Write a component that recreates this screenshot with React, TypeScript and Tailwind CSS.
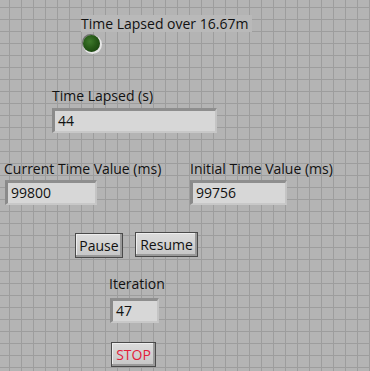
import React from 'react';

const font = { fontFamily: '"Open Sans", "Noto Sans", sans-serif' };

function Indicator({ value, width }: { value: string; width: string }) {
  return (
    <div
      className={`${width} h-[25px] flex items-center bg-[#d7d7d7] border-t-[3px] border-l-[3px] border-r-2 border-b-2 border-t-[#8e8e8e] border-l-[#8a8a8a] border-r-[#c4c4c4] border-b-[#c8c8c8] pl-[3px] text-[14px] text-[#111] leading-none`}
    >
      {value}
    </div>
  );
}

function Button({ label, width, red }: { label: string; width: string; red?: boolean }) {
  return (
    <button
      className={`${width} h-[25px] flex items-center justify-center bg-gradient-to-b from-[#dcdcdc] to-[#c6c6c6] border border-[#4a4a4a] shadow-[inset_-2px_-2px_0_#9a9a9a,inset_1px_1px_0_#eeeeee] text-[14px] leading-none ${red ? 'text-[#e2203a]' : 'text-[#111]'}`}
    >
      {label}
    </button>
  );
}

export default function App() {
  return (
    <div
      style={font}
      className="w-[370px] h-[371px] overflow-hidden flex flex-col bg-[#b4b4b4] [background-image:linear-gradient(to_right,#9d9d9d_1px,transparent_1px),linear-gradient(to_bottom,#9d9d9d_1px,transparent_1px)] [background-size:12px_12px] [background-position:9px_7px] text-[14px] leading-[17px] text-[#111]"
    >
      <div className="mt-[15px] ml-[81px] self-start h-[17px] pr-[4px] bg-[#b9b9b9]">Time Lapsed over 16.67m</div>

      <div className="mt-[3px] ml-[83px] w-[17px] h-[17px] rounded-full bg-[radial-gradient(circle_at_40%_38%,#3f7a2c_0%,#275a18_45%,#143a0c_100%)] shadow-[1px_1px_0_1px_#e6e6e6,-1px_-1px_0_0_#707070]" />

      <div className="mt-[35px] ml-[52px] h-[17px]">Time Lapsed (s)</div>
      <div className="mt-[4px] ml-[52px]">
        <Indicator value="44" width="w-[165px]" />
      </div>

      <div className="mt-[27px] ml-[4px] flex">
        <div className="w-[186px] flex flex-col">
          <div className="h-[17px]">Current Time Value (ms)</div>
          <div className="mt-[3px] ml-[1px]">
            <Indicator value="99800" width="w-[92px]" />
          </div>
        </div>
        <div className="flex flex-col">
          <div className="h-[17px]">Initial Time Value (ms)</div>
          <div className="mt-[3px]">
            <Indicator value="99756" width="w-[97px]" />
          </div>
        </div>
      </div>

      <div className="mt-[27px] ml-[75px] flex items-start">
        <div className="mt-[1px]">
          <Button label="Pause" width="w-[48px]" />
        </div>
        <div className="ml-[12px]">
          <Button label="Resume" width="w-[63px]" />
        </div>
      </div>

      <div className="mt-[17px] ml-[109px] h-[17px]">Iteration</div>
      <div className="mt-[6px] ml-[110px]">
        <Indicator value="47" width="w-[49px]" />
      </div>

      <div className="mt-[19px] ml-[111px]">
        <Button label="STOP" width="w-[45px]" red />
      </div>
    </div>
  );
}
